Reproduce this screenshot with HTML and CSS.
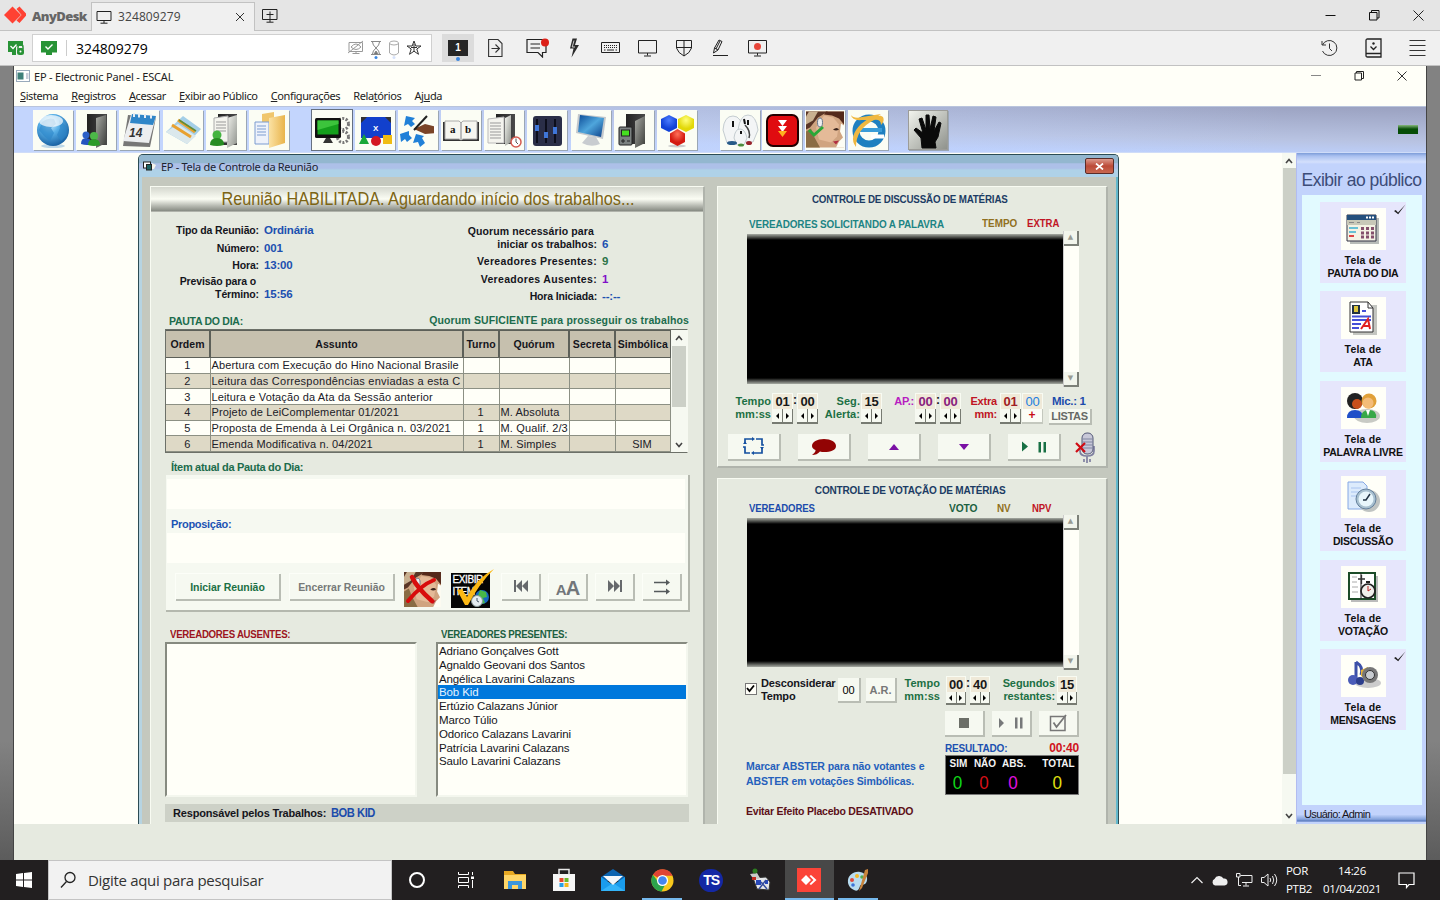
FILE: index.html
```html
<!DOCTYPE html>
<html lang="pt-BR">
<head>
<meta charset="utf-8">
<title>AnyDesk</title>
<link rel="stylesheet" href="styles.css">
</head>
<body>
<svg class="defs" width="0" height="0">
  <defs>
    <radialGradient id="globe" cx=".4" cy=".3" r=".75"><stop offset="0" stop-color="#d8f2ff"/><stop offset=".4" stop-color="#58b0e8"/><stop offset="1" stop-color="#125a9c"/></radialGradient>
    <linearGradient id="door" x1="0" x2="1"><stop offset="0" stop-color="#222"/><stop offset="1" stop-color="#4a4a4a"/></linearGradient>
    <linearGradient id="leaf" x1="0" x2="1" y2="1"><stop offset="0" stop-color="#f2f4ee"/><stop offset="1" stop-color="#8f928c"/></linearGradient>
    <linearGradient id="leafd" x1="0" x2="1" y2="1"><stop offset="0" stop-color="#a8aaa4"/><stop offset="1" stop-color="#3c3e3a"/></linearGradient>
    <linearGradient id="screen" x1="0" x2="1" y2="1"><stop offset="0" stop-color="#0b4a96"/><stop offset=".5" stop-color="#4fa6dc"/><stop offset="1" stop-color="#0c3f88"/></linearGradient>
    <linearGradient id="gold" x1="0" x2="1"><stop offset="0" stop-color="#fbe2a4"/><stop offset="1" stop-color="#e9b44c"/></linearGradient>
    <radialGradient id="hexr" cy=".3"><stop offset="0" stop-color="#ff7058"/><stop offset="1" stop-color="#d41a10"/></radialGradient>
    <radialGradient id="hexb" cy=".3"><stop offset="0" stop-color="#4b7cff"/><stop offset="1" stop-color="#1242d8"/></radialGradient>
    <radialGradient id="hexy" cy=".3"><stop offset="0" stop-color="#ffff7c"/><stop offset="1" stop-color="#e2d808"/></radialGradient>
    <symbol id="face" viewBox="0 0 38 36">
      <rect width="38" height="36" fill="#d0a480"/>
      <path d="M0 0H22L12 6L4 16L0 18Z" fill="#5a3626"/><path d="M20 0L38 0V13L33 7L26 4L18 3Z" fill="#54291a"/><path d="M3 0H12L7 9L0 13V5Z" fill="#c8b090"/>
      <path d="M0 20L5 17L8 25L14 36H0Z" fill="#8a6c44"/><path d="M18 4L27 6L33 13L31 25L25 31L13 28L10 16Z" fill="#e4ba98"/>
      <path d="M35 12L38 14V36H30L33 30L37 26L34 20Z" fill="#fdfdf4"/><path d="M27 18q4-3 6 0q-3 2-6 0" fill="#3a241c"/><path d="M27 30l6-1l-3 4z" fill="#b02c40"/>
      <ellipse cx="14" cy="11" rx="2.500" ry="4.500" fill="#eee" stroke="#65778c"/>
    </symbol>
    <symbol id="tick" viewBox="0 0 12 12"><path d="M0 8L1.800 7L4 9.500L11.500 1.500L4.200 11.300Z" fill="#222"/></symbol>
  </defs>
</svg>

<header class="tabs">
  <div class="brand"><svg width="25" height="20" viewBox="0 0 25 20"><path d="M3 10L11.500 1.500L20 10L11.500 18.500Z" fill="#ff4133"/><path d="M16.500 4L19.500 1.500L27 9.500L19.500 18L16.500 15.500L21.500 10Z" transform="translate(-1 0)" fill="#ff4133"/></svg><b>AnyDesk</b></div>
  <div class="tab">
    <svg width="16" height="14" viewBox="0 0 16 14" fill="none" stroke="#222"><path d="M1 1.500H15V10.500H1ZM8 10.500V13M4.500 13.200H11.500"/></svg>
    <span>324809279</span>
    <svg width="10" height="10" viewBox="0 0 10 10" stroke="#333" fill="none"><path d="M1 1L9 9M9 1L1 9"/></svg>
  </div>
  <svg class="newtab" width="16" height="14" viewBox="0 0 16 14" fill="none" stroke="#222"><path d="M.5.500H15V10.500H.5ZM8 2.500V13M4.500 13.200H11.500M4.500 5.500H11.500"/></svg>
  <div class="winctl">
    <svg width="11" height="11" viewBox="0 0 11 11"><path d="M.5 5.500H10.500" stroke="#111"/></svg>
    <svg width="11" height="11" viewBox="0 0 11 11" fill="none" stroke="#111"><path d="M.5 2.500H8V10H.5ZM2.500 2.500V.5H10V8H8"/></svg>
    <svg width="11" height="11" viewBox="0 0 11 11" fill="none" stroke="#222"><path d="M.5.500L10.500 10.500M10.500.500L.5 10.500"/></svg>
  </div>
</header>

<div class="bar">
  <svg class="b-lock" width="17" height="16" viewBox="0 0 17 16"><path d="M0 1H15V7H8V12H0Z M4 12H8V15H4Z" fill="#289336"/><path d="M2.500 6L5 8.500L8.500 4.500" stroke="#fff" fill="none" stroke-width="1.300"/><path d="M8.500 6H16.500V16H8.500Z" fill="#f0f0f0"/><rect x="9" y="8" width="7" height="7" rx="2.500" fill="#289336"/><path d="M10 9V7a2.500 2.500 0 0 1 5 0V9" stroke="#289336" fill="none" stroke-width="1.500"/><circle cx="12.500" cy="11.500" r="1" fill="#fff"/></svg>
  <div class="addr">
    <svg width="16" height="14" viewBox="0 0 16 14"><path d="M0 0H16V11.500H11V14H5V11.500H0Z" fill="#289336"/><path d="M4.500 5.500L7 8L11.500 3.500" stroke="#fff" fill="none" stroke-width="1.400"/></svg>
    <i></i><span>324809279</span>
    <div class="addr-ic">
      <svg width="16" height="22" viewBox="0 0 16 22" fill="none" stroke="#999"><path d="M1 5.500H14.500V14.500H1ZM8 14.500V16.500M4.500 16.500H11.500M0 16L15 4M3 10q5-6 10 0q-5 5-10 0"/></svg>
      <svg width="12" height="22" viewBox="0 0 12 22" fill="none" stroke="#888"><path d="M1 4.500H11M1 17.500H11M2.500 5Q2.500 8 6 11Q9.500 8 9.500 5M2.500 17Q2.500 14 6 11Q9.500 14 9.500 17"/><path d="M4 17L6 14L8 17" fill="#777"/><circle cx="6" cy="20.500" r="1.500" fill="#3b86e0" stroke="none"/></svg>
      <svg width="12" height="22" viewBox="0 0 12 22" fill="none" stroke="#aaa"><ellipse cx="6" cy="6" rx="4.500" ry="2"/><path d="M1.500 6V16q4.500 4 9 0V6"/><circle cx="6" cy="20.500" r="1.500" fill="#d6e2fb" stroke="none"/></svg>
      <svg width="16" height="22" viewBox="0 0 16 22" fill="none" stroke="#333"><path d="M8 4L9.800 9H15L10.800 12L12.500 17.300L8 14.200L3.500 17.300L5.200 12L1 9H6.200Z M8 7V14M5 10.500H11"/></svg>
    </div>
  </div>
  <div class="mon"><b>1</b></div>
  <div class="tools">
    <svg width="15" height="20" viewBox="0 0 15 20" fill="none" stroke="#333" stroke-width="1.100"><path d="M.6 1.500H10L14 5.500V18.500H.6ZM3.500 10.500H11.500M7.500 6.500L11.500 10.500L7.500 14.500"/></svg>
    <svg width="23" height="20" viewBox="0 0 23 20" fill="none" stroke="#222" stroke-width="1.200"><path d="M1 1.500H20V14.500H16.500V19L12 14.500H1ZM4.500 6H14M4.500 10H14"/><circle cx="19" cy="4.500" r="4" fill="#dc2018" stroke="none"/></svg>
    <svg width="11" height="20" viewBox="0 0 11 20"><path d="M3.500 .5H8L6 7H10L2.500 19.500L4.500 10.500H1Z" fill="#2a2a2a"/><path d="M5 2.500L3.200 9H6" fill="none" stroke="#eee" stroke-width=".8"/></svg>
    <svg width="19" height="20" viewBox="0 0 19 20" fill="none" stroke="#222"><path d="M.5 4.500H18.500V14.500H.5Z"/><path d="M3 7.500H16.500M3 9.500H16.500" stroke-dasharray="1 1"/><path d="M3 12H4.500M6 12H13M14.500 12H16"/></svg>
    <svg width="19" height="20" viewBox="0 0 19 20" fill="none" stroke="#222"><path d="M.5 2.500H18.500V15H.5ZM9.500 15V17.500M6 18H13"/></svg>
    <svg width="16" height="20" viewBox="0 0 16 20" fill="none" stroke="#222"><path d="M.5 2.500H15.500V10q-1.500 5-7.500 8q-6-3-7.500-8ZM8 2.500V18M.5 9.500H15.500"/></svg>
    <svg width="16" height="20" viewBox="0 0 16 20" fill="none" stroke="#222"><path d="M1 17.500H16M1.500 15L2.500 10L7 2L10 3.500L6 12L1.500 15M2.500 10L6 12M8 3L4 11"/></svg>
    <svg width="19" height="20" viewBox="0 0 19 20" fill="none" stroke="#222"><path d="M.5 2.500H18.500V15H.5ZM9.500 15V17.500M6 18H13"/><circle cx="9.500" cy="8.500" r="3.500" fill="#e8463a" stroke="none"/></svg>
  </div>
  <div class="rtools">
    <svg width="17" height="18" viewBox="0 0 17 18" fill="none" stroke="#333"><path d="M1 2V6H5M1.500 6A7.500 7.500 0 1 1 1.500 12M8.500 4.500V9.500L11 12"/></svg>
    <svg width="17" height="20" viewBox="0 0 17 20" fill="none" stroke="#222" stroke-width="1.300"><path d="M2.500 1H16V19H2.500Q1 19 1 17.500V2.500Q1 1 2.500 1M1 15.500H16"/><circle cx="8.500" cy="5.500" r="1.200" fill="#222" stroke="none"/><path d="M5.500 8.500L8.500 11.500L11.500 8.500"/></svg>
    <svg width="17" height="18" viewBox="0 0 17 18" stroke="#333"><path d="M.5 1.500H16.500M.5 6.500H16.500M.5 11.500H16.500M.5 16.500H16.500"/></svg>
  </div>
</div>

<main class="remote">
  <div class="app">
    <div class="apptitle">
      <svg width="14" height="12" viewBox="0 0 14 12"><rect x=".5" y=".5" width="13" height="11" fill="#fff" stroke="#9ab"/><rect x="1.500" y="2.500" width="6" height="7" fill="#3f8079"/><rect x="10" y="3" width="2.500" height="6" fill="#c8ccd8"/></svg>
      <span>EP - Electronic Panel - ESCAL</span>
      <div class="appctl">
        <svg width="10" height="10" viewBox="0 0 10 10"><path d="M0 4.500H10" stroke="#888"/></svg>
        <svg width="10" height="10" viewBox="0 0 10 10" fill="none" stroke="#222"><path d="M1 2H7.500V9H1ZM2.500 2V.5H9.500V7.500H7.500"/></svg>
        <svg width="10" height="10" viewBox="0 0 10 10" stroke="#333"><path d="M.5.500L9.500 9.500M9.500.500L.5 9.500"/></svg>
      </div>
    </div>
    <nav class="menu"><span><u>S</u>istema</span><span><u>R</u>egistros</span><span><u>A</u>cessar</span><span><u>E</u>xibir ao Público</span><span><u>C</u>onfigurações</span><span>Rela<u>t</u>órios</span><span>Aj<u>u</u>da</span></nav>

    <div class="ribbon">
      <div class="rg">
        <svg viewBox="0 0 40 40"><ellipse cx="20" cy="36" rx="12" ry="2" fill="#bdd8e8"/><circle cx="20" cy="20" r="16" fill="url(#globe)"/><path d="M9 12q6-5 12-3l2 5l-5 4l3 5l-4 8l-6-5l-5-6zM26 10l7 6l1 9l-6 6l-4-6l3-7z" fill="#2c86c8" opacity=".65"/><ellipse cx="18" cy="11" rx="12" ry="6" fill="#fff" opacity=".7"/></svg>
        <svg viewBox="0 0 40 40"><path d="M11 4H31V35H11Z" fill="url(#door)"/><path d="M20 8L30 5V33L20 38Z" fill="url(#leafd)"/><circle cx="10" cy="25" r="3.500" fill="#2c60c8"/><path d="M5 34q0-6 5-6t6 6q-5 2-11 0z" fill="#2454c0"/><circle cx="18" cy="26" r="4" fill="#4cb848"/><path d="M12 35q0-6 6-6t6 6q-6 2-12 0z" fill="#2c9c28"/></svg>
        <svg viewBox="0 0 40 40"><path d="M9 5L37 7L31 37L4 36Z" fill="#777"/><path d="M12 5L37 6L30 33L4 31Z" fill="#eceef0"/><path d="M13 4L37 6L34 15L11 13Z" fill="#2f86c8"/><path d="M15 3v4M20 3.500v4M26 4v4M32 4.500v4" stroke="#e8eef4" stroke-width="2"/><text x="10" y="27" class="cal">14</text></svg>
        <svg viewBox="0 0 40 40"><path d="M3 22L20 6L38 19L24 34Z" fill="#a4cfe8"/><path d="M3 22L15 14L33 26L24 34Z" fill="#dbe8ec"/><path d="M9 15L28 27M15 10L32 22" stroke="#e8a130" stroke-width="3"/><path d="M16 10L33 21" stroke="#608c38" stroke-width="1.500"/></svg>
        <svg viewBox="0 0 40 40"><path d="M12 4H31V35H12Z" fill="url(#door)"/><path d="M21 8L31 5V33L21 38Z" fill="url(#leaf)"/><path d="M8 8L22 6V32L8 32Z" fill="#f4f4ee" stroke="#aaa"/><path d="M10 12H20M10 15H20M10 18H20M10 21H20" stroke="#999"/><circle cx="11" cy="25" r="4.500" fill="#45b440"/><path d="M4 35q0-7 7-7t7 7q-7 2-14 0z" fill="#278c22"/></svg>
        <svg viewBox="0 0 40 40"><path d="M13 4L25 2V34L13 33Z" fill="#f0c66c"/><path d="M6 12H20V34H6Z" fill="#eef2fa" stroke="#7d9cd0"/><path d="M8 16H17M8 19H17M8 22H17M8 25H17" stroke="#7d9cd0"/><path d="M20 8L36 5V33L20 38Z" fill="url(#gold)"/></svg>
      </div>
      <div class="rg g2">
        <svg class="on" viewBox="0 0 40 40"><g fill="none" stroke="#777" stroke-width="3" stroke-dasharray="2 1.500"><circle cx="31" cy="14" r="5.500"/><circle cx="31" cy="27" r="5.500"/></g><rect x="3" y="8" width="26" height="20" rx="1.500" fill="#111"/><rect x="5.500" y="10.500" width="21" height="14" fill="#14a01c"/><path d="M5.500 10.500H26.500V14L5.500 20Z" fill="#3cc43c"/><path d="M14 28H18L21 33H11Z" fill="#333"/></svg>
        <svg viewBox="0 0 40 40"><path d="M6 7H36V28H6Z" fill="#1240cc"/><path d="M6 7h6l-6 6zM36 7h-6l6 6z" fill="#333"/><text x="18" y="21" class="xw">X</text><path d="M9 24L14 34H4Z" fill="#18a838"/><circle cx="21" cy="31" r="5" fill="#d41822"/><rect x="28" y="25" width="9" height="9" fill="#f0bc12"/></svg>
        <svg viewBox="0 0 40 40"><path d="M8 6L17 8L14 11L17 14L13 17L10 14L6 16ZM2 24L11 21L11 25L14 28L9 32L7 29L3 32ZM18 24L26 26L24 28L27 33L22 37L20 32L15 33Z" fill="#2080d8"/><path d="M16 19L27 14L39 17V23L27 24Z" fill="#7a4428"/><path d="M36 16h4v8h-4z" fill="#fff"/><path d="M16 20L29 6" stroke="#202020" stroke-width="2"/></svg>
        <svg viewBox="0 0 40 40"><path d="M2 12V31H38V12" fill="#333"/><path d="M4 11H18Q20 12 20 14Q20 12 22 11H36V29H22L20 30L18 29H4Z" fill="#f6f6f0" stroke="#aaa"/><path d="M20 13V30" stroke="#bbb" stroke-width="2"/><text x="9" y="23" class="ab">a</text><text x="24" y="23" class="ab">b</text></svg>
        <svg viewBox="0 0 40 40"><path d="M12 4H31V34H12Z" fill="url(#door)"/><path d="M21 8L27 5V32L21 36Z" fill="url(#leaf)"/><path d="M4 9L20 7V33H4Z" fill="#f4f4ee" stroke="#bbb"/><path d="M6 13H17M6 16H17M6 19H17M6 22H17M6 25H17M6 28H17" stroke="#999"/><circle cx="32" cy="32" r="5" fill="#fff" stroke="#d45a50" stroke-width="1.500"/><path d="M32 28.500V32L34 34" fill="none" stroke="#555"/></svg>
        <svg viewBox="0 0 40 40"><rect x="6" y="6" width="29" height="30" rx="3" fill="#2a2e48"/><path d="M10 9V33M19 9V33M28 9V33" stroke="#0c0e1c" stroke-width="2"/><path d="M8 15h4v6H8zM17 22h4v6h-4zM26 17h4v7h-4z" fill="#3f76d8"/></svg>
        <svg viewBox="0 0 40 40"><path d="M17 26L25 27L29 34Q20 38 11 33Z" fill="#c8ccd0"/><path d="M7 4L35 7L32 29L5 23Z" fill="#c4c8cc"/><path d="M9 5L33 8L30 27L7 22Z" fill="url(#screen)"/></svg>
        <svg viewBox="0 0 40 40"><path d="M12 4H31V34H12Z" fill="url(#door)"/><path d="M21 11L31 6V33L21 38Z" fill="url(#leafd)"/><rect x="5" y="17" width="13" height="18" rx="1" fill="#7b8180" stroke="#222"/><rect x="7.500" y="20" width="8" height="6" fill="#46e020" stroke="#222"/><path d="M7 31h4M9 29v4M13 31h3" stroke="#222"/></svg>
        <svg viewBox="0 0 40 40"><ellipse cx="20" cy="36" rx="9" ry="1.500" fill="#ccc"/><path d="M12 5L20 9V18L12 22L4 18V9Z" fill="url(#hexb)"/><path d="M29 5L37 9V18L29 22L21 18V9Z" fill="url(#hexy)"/><path d="M20.500 19L28 23.500V32L20.500 36L13 32V23.500Z" fill="url(#hexr)"/></svg>
      </div>
      <div class="rg g3">
        <svg viewBox="0 0 40 40"><g fill="#f3f5f6" stroke="#c4ccd0"><path d="M3 20Q4 6 13 6T23 22L19 33H7Z"/><path d="M18 20Q20 5 28 5T38 20L33 32H22Z"/><path d="M14 28Q15 19 20 19T27 28L24 35H17Z"/></g><path d="M13 11v6M24 9l1 5M28 10v5M21 21v3" stroke="#111" stroke-width="2"/><path d="M25 15q6 6 4 13" stroke="#444" fill="none" stroke-width="1.500"/><ellipse cx="12" cy="33" rx="5" ry="2" fill="#275a88"/><ellipse cx="29" cy="33" rx="3" ry="2" fill="#98242c"/><ellipse cx="21" cy="35" rx="3" ry="1.500" fill="#4c8c3c"/></svg>
        <svg viewBox="0 0 40 40"><rect x="5" y="5" width="31" height="31" rx="6" fill="#e00c10" stroke="#200" stroke-width="2"/><path d="M16 10H25L20.500 16ZM16 16H25L20.500 22Z" fill="#fff"/><path d="M16 21H25L20.500 27Z" fill="#ffb020"/></svg>
        <svg viewBox="0 0 40 40"><use href="#face" x="1" y="1" width="38" height="37"/><path d="M4 20L9 25L18 17" fill="none" stroke="#2aa838" stroke-width="3"/></svg>
        <svg viewBox="0 0 40 40"><circle cx="21" cy="21" r="13" fill="none" stroke="#1e80c0" stroke-width="7"/><path d="M12 20H34" stroke="#3a9cd8" stroke-width="4"/><path d="M36 26.500H23" stroke="#fff" stroke-width="4"/><path d="M8 37Q0 27 13 14Q28 2 35 7Q37 11 33 15Q33 9 26 10Q8 19 8 37ZM3 5Q6 9 14 7L33 4Q25 10 14 10Q4 11 3 5Z" fill="#f0b840"/></svg>
      </div>
      <div class="rg g4">
        <svg viewBox="0 0 40 40"><rect width="40" height="40" fill="#9c9c98"/><rect x="1" y="1" width="38" height="38" fill="url(#leaf)"/><path d="M14 38L13 28L6 20L8 18L15 23L11 9L14 8L18 20L18 5L21 5L22 19L25 6L28 7L26 21L31 12L33 13L30 27L27 32L28 38Z" fill="#0a0a0a" stroke="#0a0a0a"/></svg>
      </div>
      <span class="led"></span>
    </div>

    <div class="mdi">
      <div class="client">
        <section class="win">
          <div class="wtitle"><svg width="14" height="10" viewBox="0 0 14 10"><rect x=".5" y="1" width="7" height="6" fill="#fff" stroke="#222"/><rect x="3.500" y="3.500" width="5" height="5.500" fill="#1c6464" stroke="#222"/><path d="M9 2L13 4L11 8L9 8Z" fill="#f4f4ec"/></svg><span>EP - Tela de Controle da Reunião</span><div class="wclose"><svg width="9" height="7" viewBox="0 0 9 7"><path d="M1 .5L8 6.500M8 .5L1 6.500" stroke="#fff" stroke-width="1.700"/></svg></div></div>
          <div class="wbody">
            <div class="panel left">
              <h1><span>Reunião HABILITADA. Aguardando início dos trabalhos...</span></h1>
              <div class="info">
                <dl class="i1">
                  <dt>Tipo da Reunião:</dt><dd>Ordinária</dd>
                  <dt>Número:</dt><dd>001</dd>
                  <dt>Hora:</dt><dd>13:00</dd>
                  <dt class="s pr">Previsão para o</dt><dd class="s"></dd>
                  <dt class="s">Término:</dt><dd class="s">15:56</dd>
                </dl>
                <dl class="i2">
                  <dt class="s pr">Quorum necessário para</dt><dd class="s"></dd>
                  <dt class="s gap">iniciar os trabalhos:</dt><dd class="s gap">6</dd>
                  <dt>Vereadores Presentes:</dt><dd class="green">9</dd>
                  <dt>Vereadores Ausentes:</dt><dd class="violet">1</dd>
                  <dt class="tight">Hora Iniciada:</dt><dd>--:--</dd>
                </dl>
              </div>
              <div class="cap"><b>PAUTA DO DIA:</b><b class="suf">Quorum SUFICIENTE para prosseguir os trabalhos</b></div>
              <div class="gridbox">
                <table>
                  <colgroup><col class="c1"><col class="c2"><col class="c3"><col class="c4"><col class="c5"><col class="c6"></colgroup>
                  <thead><tr><th>Ordem</th><th>Assunto</th><th>Turno</th><th>Quórum</th><th>Secreta</th><th>Simbólica</th></tr></thead>
                  <tbody>
                    <tr><td>1</td><td>Abertura com Execução do Hino Nacional Brasile</td><td></td><td></td><td></td><td></td></tr>
                    <tr><td>2</td><td class="wide">Leitura das Correspondências enviadas a esta C</td><td></td><td></td><td></td><td></td></tr>
                    <tr><td>3</td><td>Leitura e Votação da Ata da Sessão anterior</td><td></td><td></td><td></td><td></td></tr>
                    <tr><td>4</td><td>Projeto de LeiComplementar 01/2021</td><td>1</td><td>M. Absoluta</td><td></td><td></td></tr>
                    <tr><td>5</td><td>Proposta de Emenda à Lei Orgânica n. 03/2021</td><td>1</td><td>M. Qualif. 2/3</td><td></td><td></td></tr>
                    <tr><td>6</td><td>Emenda Modificativa n. 04/2021</td><td>1</td><td>M. Simples</td><td></td><td>SIM</td></tr>
                  </tbody>
                </table>
                <div class="vs"><svg width="8" height="6" viewBox="0 0 8 6"><path d="M1 5L4 1.500L7 5" fill="none" stroke="#444" stroke-width="1.600"/></svg><i></i><svg width="8" height="6" viewBox="0 0 8 6"><path d="M1 1L4 4.500L7 1" fill="none" stroke="#444" stroke-width="1.600"/></svg></div>
              </div>
              <b class="item">Ítem atual da Pauta do Dia:</b>
              <div class="itembox">
                <div class="fld"></div>
                <b>Proposição:</b>
                <div class="fld"></div>
                <div class="ibtns">
                  <button class="w105 gr">Iniciar Reunião</button>
                  <button class="w105 dis">Encerrar Reunião</button>
                  <svg class="p1" width="37" height="35" viewBox="0 0 37 35"><use href="#face" width="37" height="35"/><path d="M8 5Q13 16 28 29" fill="none" stroke="#d80c0c" stroke-width="4.500" stroke-linecap="round"/><path d="M30 8Q17 13 4 29" fill="none" stroke="#d80c0c" stroke-width="4" stroke-linecap="round"/></svg>
                  <svg class="p2" width="44" height="40" viewBox="0 0 44 40"><rect y="5" width="39" height="35" fill="#050505"/><text x="1.500" y="14.500" class="ex">EXIBIR</text><text x="1.500" y="27" class="ex">ITEM</text><circle cx="31" cy="29" r="7" fill="#1668c0"/><path d="M29 22l6 2l1 5l-4 1l2 5l-4 1l-4-6z" fill="#48b848"/><circle cx="26" cy="33" r="5.500" fill="#e4ecf0" stroke="#899"/><path d="M26 30V33L28 34" fill="none" stroke="#456"/><path d="M6 22L11 21L16 29Q26 10 43 1Q28 16 17 37H14Z" fill="#fbb814"/></svg>
                  <button class="w39 n1"><svg width="16" height="13" viewBox="0 0 16 13" fill="#66696c"><path d="M1 0H3V12H1ZM9 0V12L3 6ZM15 0V12L9 6Z"/></svg></button>
                  <button class="w39 aa"><small>A</small>A</button>
                  <button class="w39"><svg width="16" height="13" viewBox="0 0 16 13" fill="#66696c"><path d="M13 0H15V12H13ZM7 0V12L13 6ZM1 0V12L7 6Z"/></svg></button>
                  <button class="w39"><svg width="18" height="16" viewBox="0 0 18 16" fill="none" stroke="#555a5c" stroke-width="1.600"><path d="M1 3.500H15M1 12.500H15"/><path d="M13 .5L17 3.500L13 6.500ZM13 9.500L17 12.500L13 15.500Z" fill="#555a5c" stroke="none"/></svg></button>
                </div>
              </div>
              <div class="lists">
                <div><b class="dred">VEREADORES AUSENTES:</b><ul></ul></div>
                <div><b class="dgreen">VEREADORES PRESENTES:</b><ul><li>Adriano Gonçalves Gott</li><li>Agnaldo Geovani dos Santos</li><li>Angélica Lavarini Calazans</li><li class="sel">Bob Kid</li><li>Ertúzio Calazans Júnior</li><li>Marco Túlio</li><li>Odorico Calazans Lavarini</li><li>Patrícia Lavarini Calazans</li><li>Saulo Lavarini Calazans</li></ul></div>
              </div>
              <div class="resp"><b>Responsável pelos Trabalhos:</b><b class="blue">BOB KID</b></div>
            </div>

            <div class="right">
              <div class="panel disc">
                <h2>CONTROLE DE DISCUSSÃO DE MATÉRIAS</h2>
                <div class="heads"><b class="teal">VEREADORES SOLICITANDO A PALAVRA</b><b class="ochre">TEMPO</b><b class="red">EXTRA</b></div>
                <div class="lcd"><div></div><div class="os"><i>▲</i><i>▼</i></div></div>
                <div class="spins">
                  <label class="gr">Tempo<br>mm:ss</label>
                  <div class="spin">01<s></s></div><b>:</b><div class="spin">00<s></s></div>
                  <label class="gr">Seg.<br>Alerta:</label><div class="spin">15<s></s></div>
                  <label class="mag">AP.:<br>&nbsp;</label><div class="spin pur">00<s></s></div><b>:</b><div class="spin pur">00<s></s></div>
                  <label class="red">Extra<br>mm:</label><div class="spin drd">01<s></s></div><div class="spin plus">00<s></s></div>
                  <div class="mic"><b>Mic.: 1</b><button>LISTAS</button></div>
                </div>
                <div class="dbtns">
                  <button><svg width="24" height="19" viewBox="0 0 24 19" fill="none" stroke="#1450a0" stroke-width="1.700"><path d="M10 2H3V7M1 10H3V16H8M12 16H20V11M22 8H20V2H14"/><path d="M10 0L13 2L10 4ZM12 14L9 16L12 18ZM1 7H5L3 4.500ZM18 10H22L20 12.500Z" fill="#1450a0" stroke="none"/></svg></button>
                  <button><svg width="26" height="18" viewBox="0 0 26 18"><path d="M13 1C20 1 25 4 25 8S20 14 13 14Q11 14 9 13.500Q6 17 1 17Q5 14 4.500 12Q1 10.500 1 8C1 4 6 1 13 1Z" fill="#920404"/></svg></button>
                  <button><svg width="10" height="6" viewBox="0 0 10 6"><path d="M0 6L5 0L10 6Z" fill="#7a10a4"/></svg></button>
                  <button><svg width="10" height="6" viewBox="0 0 10 6"><path d="M0 0L5 6L10 0Z" fill="#7a10a4"/></svg></button>
                  <button><svg width="24" height="12" viewBox="0 0 24 12" fill="#187044"><path d="M0 .5L6 5.500L0 10.500ZM16.500 1H19V11.500H16.500ZM21.500 1H24V11.500H21.500Z"/></svg></button>
                  <svg class="micro" width="22" height="32" viewBox="0 0 22 32"><path d="M5 14V19Q5 24 12 24T19 19V14M12 24V31M9 27V30M15 27V30" fill="none" stroke="#7f80a0" stroke-width="1.700"/><rect x="7" y="1" width="11" height="21" rx="5" fill="#c8c8d8" stroke="#555a78"/><path d="M7 7H18M7 10H18M7 13H18M7 16H18" stroke="#8086a0"/><path d="M1 11L10 20M10 11L1 20" stroke="#d00c14" stroke-width="2.200"/></svg>
                </div>
              </div>
              <div class="panel vote">
                <h2>CONTROLE DE VOTAÇÃO DE MATÉRIAS</h2>
                <div class="heads v"><b class="blue">VEREADORES</b><b class="dgreen">VOTO</b><b class="ochre">NV</b><b class="red">NPV</b></div>
                <div class="lcd"><div></div><div class="os"><i>▲</i><i>▼</i></div></div>
                <div class="vopts">
                  <span class="chk"><svg width="9" height="9" viewBox="0 0 9 9"><path d="M1 4L3.500 7L8 1.500" fill="none" stroke="#000" stroke-width="1.800"/></svg></span>
                  <label class="blk">Desconsiderar<br>Tempo</label>
                  <button class="z">00</button><button class="ar">A.R.</button>
                  <label class="gr t">Tempo<br>mm:ss</label>
                  <div class="spin">00<s></s></div><b>:</b><div class="spin">40<s></s></div>
                  <label class="gr seg">Segundos<br>restantes:</label><div class="spin">15<s></s></div>
                </div>
                <div class="vbtns">
                  <button><svg width="10" height="10"><rect width="10" height="10" fill="#6c6f68"/></svg></button>
                  <button><svg width="24" height="12" viewBox="0 0 24 12" fill="#77797a"><path d="M0 1L5 6L0 11ZM16 .5H18.500V11.500H16ZM21 .5H23.500V11.500H21Z"/></svg></button>
                  <button><svg width="19" height="18" viewBox="0 0 19 18" fill="none" stroke="#777"><path d="M1.500 2.500H16V16.500H1.500Z" stroke-width="1.500"/><path d="M4.500 8.500L7.500 13L17 1" stroke-width="1.800"/></svg></button>
                </div>
                <div class="vbot">
                  <div class="notes"><p>Marcar ABSTER para não votantes e<br>ABSTER em votações Simbólicas.</p><p class="evi">Evitar Efeito Placebo DESATIVADO</p></div>
                  <div class="res">
                    <div class="rh"><b>RESULTADO:</b><b>00:40</b></div>
                    <div class="score"><b>SIM</b><b>NÃO</b><b>ABS.</b><b>TOTAL</b><i class="g">0</i><i class="r">0</i><i class="m">0</i><i class="y">0</i></div>
                  </div>
                </div>
              </div>
            </div>
          </div>
        </section>
      </div>
      <div class="cvs"><svg width="8" height="6" viewBox="0 0 8 6"><path d="M1 5L4 1.500L7 5" fill="none" stroke="#444" stroke-width="1.600"/></svg><i></i><svg width="8" height="6" viewBox="0 0 8 6"><path d="M1 1L4 4.500L7 1" fill="none" stroke="#444" stroke-width="1.600"/></svg></div>
      <aside class="side">
        <h3>Exibir ao público</h3>
        <div class="cards">
          <div class="card"><svg viewBox="0 0 45 42"><path d="M9 10H38V36H9Z" fill="#b8bcb8"/><path d="M6 7H35V33H6Z" fill="#f4f2e4" stroke="#334"/><path d="M6 7H35V12H6Z" fill="#24507c"/><path d="M25 9.500H33" stroke="#fff" stroke-width="2" stroke-dasharray="2 1"/><path d="M6 12H35V17H6Z" fill="#c8c8b8"/><path d="M8 14.500H13M16 14.500H19" stroke="#888"/><path d="M8 20H17M8 24H15" stroke="#3ab0d0" stroke-width="1.500"/><path d="M8 28H13" stroke="#d44" stroke-width="2"/><path d="M20 20.500H33M20 25H33M20 29H33" stroke="#84506c" stroke-width="3" stroke-dasharray="3 2"/></svg><b>Tela de</b><b class="n">PAUTA DO DIA</b><em><svg><use href="#tick"/></svg></em></div>
          <div class="card"><svg viewBox="0 0 45 42"><path d="M12 8H36V38H12Z" fill="#c4c6c0"/><path d="M9 5H27L32 11V35H9Z" fill="#fff" stroke="#333"/><path d="M27 5V11H32" fill="none" stroke="#333"/><rect x="11" y="8" width="8" height="9" fill="#234"/><path d="M13 9h4v6h-4z" fill="#dcc43c"/><path d="M21 14H25M11 19.500H30M11 23H30M11 27H20M11 31H18" stroke="#4450d8" stroke-width="2"/><path d="M20 32L27 22L29 32M22 29H29" fill="none" stroke="#e02020" stroke-width="2"/></svg><b>Tela de</b><b class="n">ATA</b></div>
          <div class="card"><svg viewBox="0 0 45 42"><ellipse cx="26" cy="29" rx="13" ry="7" fill="#c8cac4"/><circle cx="14" cy="14" r="8" fill="#222"/><circle cx="16" cy="17" r="5" fill="#c8501c"/><path d="M6 31Q6 23 14 23T22 31Z" fill="#2050c8"/><circle cx="28" cy="14" r="7.500" fill="#e0a038"/><circle cx="27" cy="16" r="5.500" fill="#f4bc78"/><path d="M20 31Q20 23 28 23T35 31Z" fill="#38a848"/><path d="M25 23L27 29L29 23" fill="#fff"/></svg><b>Tela de</b><b class="n">PALAVRA LIVRE</b></div>
          <div class="card"><svg viewBox="0 0 45 42"><path d="M7 6H22L26 10V33H7Z" fill="#dcebfc" stroke="#86a8e4"/><path d="M10 12H20M10 16H20M10 20H18" stroke="#a9c4f0"/><circle cx="28" cy="25" r="11" fill="#c0c4c2"/><circle cx="25" cy="23" r="10" fill="#a8c0d0" stroke="#64809c"/><circle cx="25" cy="23" r="7.500" fill="#e8f6fc"/><path d="M22 24L25 24L29 18" fill="none" stroke="#234" stroke-width="1.500"/></svg><b>Tela de</b><b class="n">DISCUSSÃO</b></div>
          <div class="card"><svg viewBox="0 0 45 42"><path d="M10 10H37V36H10Z" fill="#bbb"/><path d="M8 7H34V33H8Z" fill="#fff" stroke="#1c4c28" stroke-width="2"/><path d="M11 11H16M11 16H16M11 21H17M11 26H17" stroke="#aaa"/><path d="M20 7V33" stroke="#222"/><path d="M20.500 9V18M17 13H24" stroke="#333" stroke-width="1.300"/><circle cx="27" cy="25" r="7" fill="#f0f0ec" stroke="#222" stroke-width="1.700"/><path d="M27 20V25L30 23" fill="none" stroke="#b22"/><path d="M25 16H29" stroke="#222" stroke-width="2"/></svg><b>Tela de</b><b class="n">VOTAÇÃO</b></div>
          <div class="card"><svg viewBox="0 0 45 42"><ellipse cx="27" cy="28" rx="13" ry="5" fill="#ccc"/><path d="M15 7Q23 12 20 20M15 7V26" fill="none" stroke="#3c50a8" stroke-width="3"/><circle cx="12" cy="25" r="5" fill="#4a5cb8"/><circle cx="19" cy="26" r="4" fill="#2c3e8c"/><path d="M20 15L27 12V25L20 21Z" fill="#e8b434"/><circle cx="29" cy="20" r="8" fill="#777"/><circle cx="29" cy="20" r="4.500" fill="#c8ccd0" stroke="#333"/></svg><b>Tela de</b><b class="n">MENSAGENS</b><em><svg><use href="#tick"/></svg></em></div>
        </div>
        <footer>Usuário: Admin</footer>
      </aside>
    </div>
  </div>
</main>

<div class="taskbar">
  <div class="start"><svg width="16" height="16" viewBox="0 0 16 16" fill="#fff"><path d="M0 2L7 1V7.500H0ZM8 1L16 0V7.500H8ZM0 8.500H7V15L0 14ZM8 8.500H16V16L8 15Z"/></svg></div>
  <div class="search"><svg width="18" height="18" viewBox="0 0 18 18" fill="none" stroke="#222" stroke-width="1.300"><circle cx="11" cy="6.500" r="5"/><path d="M7.500 10.500L2 16.500"/></svg><span>Digite aqui para pesquisar</span></div>
  <div class="apps">
    <div><svg width="18" height="18" viewBox="0 0 18 18"><circle cx="9" cy="9" r="7" fill="none" stroke="#fff" stroke-width="2"/></svg></div>
    <div><svg width="18" height="16" viewBox="0 0 18 16" fill="none" stroke="#fff"><path d="M1.500 0V2.500H11.500V0M1.500 5.500H11.500V10.500H1.500ZM1.500 16V13.500H11.500V16M15.500 0V3M15.500 8V16"/><path d="M14 4.500H17V7H14Z" fill="#fff" stroke="none"/></svg></div>
    <div><svg width="22" height="20" viewBox="0 0 22 20"><path d="M0 1H9L11 4H22V18H0Z" fill="#e8a922"/><path d="M0 5H22V19H0Z" fill="#ffd667"/><path d="M4 19V11H18V19H14V15H8V19Z" fill="#3a96dc"/></svg></div>
    <div><svg width="24" height="24" viewBox="0 0 24 24"><path d="M1 6H23V23H1Z" fill="#f6f6f6"/><path d="M7 7V1.500H17V7" fill="none" stroke="#e8e8e8" stroke-width="1.500"/><path d="M7.500 10H11.500V14H7.500Z" fill="#e8482c"/><path d="M12.500 10H16.500V14H12.500Z" fill="#6cb82c"/><path d="M7.500 15H11.500V19H7.500Z" fill="#28a0e8"/><path d="M12.500 15H16.500V19H12.500Z" fill="#f8b818"/></svg></div>
    <div><svg width="24" height="22" viewBox="0 0 24 22"><path d="M0 8L12 0L24 8V12H0Z" fill="#0c64b0"/><path d="M0 8L12 16L24 8V22H0Z" fill="#1a9cec"/><path d="M0 22L12 14L24 22Z" fill="#34b4f8"/><path d="M2 7H22L12 16Z" fill="#f4f8fa"/></svg></div>
    <div class="run"><svg width="23" height="23" viewBox="0 0 24 24"><circle cx="12" cy="12" r="11.500" fill="#f8c81c"/><path d="M12 12L2 6A11.500 11.500 0 0 1 22.500 7H12Z" fill="#e04434"/><path d="M2 6A11.500 11.500 0 0 0 11 23.500L16 14L8 14Z" fill="#2ca44c"/><circle cx="12" cy="12" r="5.800" fill="#fff"/><circle cx="12" cy="12" r="4.500" fill="#4486f0"/></svg></div>
    <div><span class="ts">TS</span></div>
    <div><svg width="24" height="24" viewBox="0 0 24 24"><path d="M5 10L18 9L22 14L21 22L9 21Z" fill="#e4e6e8" stroke="#333"/><path d="M2 6L9 5L12 10L6 12Z" fill="#c8ccc8"/><circle cx="7" cy="3" r="2.500" fill="#2c7c20"/><path d="M8 12h5v5H8zM17 12h3v4h-3z" fill="#2848b8"/><path d="M4 9h4v3H4z" fill="#c02c20"/><path d="M13 14L19 21M11 21L18 12" stroke="#344c9c" stroke-width="1.500"/></svg></div>
    <div class="run act"><svg width="24" height="24" viewBox="0 0 24 24"><rect width="24" height="24" fill="#fb4438"/><path d="M4 12L9 7L14 12L9 17ZM12.500 8L14 7L19.500 12L14 17L12.500 16L16.500 12Z" fill="#fff"/></svg></div>
    <div class="run"><svg width="25" height="24" viewBox="0 0 25 24"><path d="M2 15C1 7 8 3 14 4C20 5 23 10 20 15C18 18 15 15 14 18S12 24 8 22Q3 20 2 15Z" fill="#b8dcf0"/><circle cx="6" cy="12" r="2" fill="#e0483c"/><circle cx="11" cy="8" r="2" fill="#f4b828"/><circle cx="16" cy="9" r="1.800" fill="#50b050"/><circle cx="7" cy="17" r="1.800" fill="#3c74d8"/><path d="M13 23L19 2L22 1V5L16 20Z" fill="#c8843c"/></svg></div>
  </div>
  <div class="tray">
    <svg width="12" height="8" viewBox="0 0 12 8" fill="none" stroke="#eee" stroke-width="1.200"><path d="M.5 7L6 1.500L11.500 7"/></svg>
    <svg width="17" height="11" viewBox="0 0 17 11" fill="#eee"><path d="M4 10.500A3.500 3.500 0 0 1 3.500 4A5 5 0 0 1 12.500 3.500A3.500 3.500 0 0 1 13.500 10.500Z"/></svg>
    <svg width="17" height="14" viewBox="0 0 17 14" fill="none" stroke="#eee"><path d="M4.500 2.500H16V9.500H6M10 9.500V12.500M7 13H13M.5.500H4V4H.5ZM2.500 4V12.500H5"/></svg>
    <svg width="17" height="14" viewBox="0 0 17 14" fill="none" stroke="#eee"><path d="M.5 4.500H3L7 1V13L3 9.500H.5ZM9 5Q10.500 7 9 9M11.500 3Q14 7 11.500 11M13.500 1Q18 7 13.500 13"/></svg>
    <span class="lang">POR<br>PTB2</span>
    <span class="clock">14:26<br>01/04/2021</span>
    <svg class="notif" width="17" height="17" viewBox="0 0 17 17" fill="none" stroke="#fff" stroke-width="1.200"><path d="M1 1H16V12.500H11L8.500 15.500L8.500 12.500H1Z"/></svg>
  </div>
</div>
</body>
</html>
```
FILE: styles.css
```css
* { box-sizing: border-box; }
body { margin: 0; width: 1440px; height: 900px; overflow: hidden; display: flex; flex-direction: column; font: 12px "Liberation Sans", Arial, sans-serif; color: #15151c; background: #808080; }
svg { display: block; flex: none; }
.defs { position: absolute; }
h1, h2, h3, p, ul, dl, dd, dt { margin: 0; padding: 0; font-size: inherit; }
ul { list-style: none; }
button { font: inherit; padding: 0; border: 0; display: flex; align-items: center; justify-content: center; background: #f6f9f1; border-right: 2px solid #b9bdb4; border-bottom: 2px solid #b9bdb4; }
span, b, dt, dd, h1, h2, h3, td, th, label, button { white-space: nowrap; }

.tabs { height: 31px; flex: none; display: flex; background: #e5e5e5; border-bottom: 1px solid #c2c2c2; }
.brand { width: 91px; display: flex; align-items: center; font: 700 13px "Open Sans", sans-serif; color: #666; }
.brand svg { margin: 0 6px 0 1px; }
.brand b { letter-spacing: -.6px; padding-top: 1px; }
.tab { width: 164px; margin-top: 2px; height: 29px; background: #f0f0f0; border: 1px solid #c2c2c2; border-bottom: 0; display: flex; align-items: center; padding: 0 9px 0 4px; font: 12px "Open Sans", sans-serif; color: #444; }
.tab span { flex: 1; margin: -2px 0 0 6px; letter-spacing: .1px; }
.newtab { margin: 9px 0 0 7px; }
.winctl { margin-left: auto; display: flex; gap: 33px; padding: 10px 16px 0 0; }

.bar { height: 35px; flex: none; display: flex; align-items: center; background: #f0f0f0; border-bottom: 1px solid #c2c2c2; }
.b-lock { margin-left: 8px; }
.addr { width: 400px; height: 28px; margin-left: 7px; background: #fff; border: 1px solid #d0d0d0; display: flex; align-items: center; padding: 0 9px 0 8px; }
.addr i { width: 1px; height: 16px; background: #ccc; margin: 0 9px; }
.addr span { font: 14px "Open Sans", sans-serif; color: #000; letter-spacing: -.05px; }
.addr-ic { margin-left: auto; display: flex; gap: 6px; }
.mon { width: 32px; height: 28px; margin-left: 10px; background: #dcdcdc; display: flex; flex-direction: column; align-items: center; padding-top: 6px; }
.mon b { width: 20px; height: 16px; background: #262626; color: #fff; font-size: 10px; line-height: 16px; text-align: center; }
.mon::after { content: ""; width: 4px; height: 4px; border-radius: 2px; background: #3b86e0; margin-top: 1px; }
.tools { display: flex; margin-left: 14px; gap: 20px; }
.tools svg:nth-child(2) { margin-left: 3px; }
.tools svg:nth-child(4) { margin-left: 1px; }
.tools svg:nth-child(5) { margin-left: -2px; }
.tools svg:nth-child(6) { margin-left: -1px; }
.tools svg:nth-child(8) { margin-left: 0; }
.rtools { margin-left: auto; display: flex; align-items: center; gap: 27px; padding-right: 14px; }

.remote { flex: 1; padding: 0 14px; background: linear-gradient(#828282 85%, #5c5c5c); }
.app { height: 794px; background: #e6eae0; display: flex; flex-direction: column; outline: 1px solid #444; clip-path: inset(0 -1px); }
.apptitle { height: 20px; background: #fffff8; display: flex; align-items: center; padding-left: 2px; font: 11px "Noto Sans", sans-serif; color: #222; }
.apptitle span { margin: 1px 0 0 4px; letter-spacing: -.2px; }
.appctl { margin-left: auto; display: flex; gap: 33px; padding-right: 19px; }
.menu { height: 20px; background: #fffff8; display: flex; padding: 1px 0 0 6px; gap: 13.200px; font: 11px/18px "Noto Sans", sans-serif; color: #222; letter-spacing: -.4px; }

.ribbon { height: 47px; display: flex; align-items: flex-start; padding: 3px 0 0 19px; border-top: 1px solid #b9c4dc; border-bottom: 1px solid #cfdcf8; background: linear-gradient(90deg, #c3d5fd 0%, #c3d5fd 22%, rgba(195,213,253,.5) 40%, rgba(195,213,253,0) 90%), linear-gradient(181deg, #9aa1c0 0%, #b8c3e2 50%, #bdd0fc 72%, #c4d7ff 100%); }
.rg { display: flex; gap: 3.200px; }
.rg svg { width: 40px; height: 40px; background: #fbfdf4; box-shadow: 1px 1px 0 #9aa6b4; }
.rg svg.on { box-shadow: 0 0 0 1px #667080; }
.g2 { margin-left: 23px; gap: 3.100px; }
.g3 { margin-left: 23px; gap: 2.700px; }
.g4 { margin-left: 20px; }
.led { margin: 15px 8px 0 auto; width: 20px; height: 9px; background: linear-gradient(#86b87c, #064d06 45%); }
.cal { font: italic 700 12px "Liberation Sans", sans-serif; fill: #333; }
.xw { font: 700 8px "Liberation Sans", sans-serif; fill: #fff; }
.ab { font: 700 11px "Liberation Serif", serif; fill: #111; }
.ex { font: 10px "Liberation Sans", sans-serif; fill: #fff; stroke: #fff; stroke-width: .3px; letter-spacing: -.4px; }

.mdi { height: 671px; display: flex; background: #fffff8; }
.client { width: 1268px; padding: 1px 0 0 124px; overflow: hidden; }
.win { width: 981px; height: 671px; border: 1px solid #2c4c54; border-bottom: 0; border-radius: 5px 5px 0 0; background: #c4c8be; overflow: hidden; display: flex; flex-direction: column; }
.wtitle { height: 22px; flex: none; display: flex; align-items: center; padding: 0 4px 0 4px; background: linear-gradient(#93b7cf 0 35%, #adc0e8 40% 60%, #afd2e8 68%); font: 11px "Noto Sans", sans-serif; color: #1c2430; }
.wtitle span { margin-left: 4px; letter-spacing: -.3px; }
.wclose { margin-left: auto; width: 29px; height: 16px; border: 1px solid #5a2c28; border-radius: 2px; background: linear-gradient(#dc9a8c, #bc4a38 50%, #c86850); display: flex; align-items: center; justify-content: center; }
.wbody { flex: 1; display: flex; padding: 9px 9px 0 8px; gap: 12px; border-left: 3px solid #b6d4e2; border-right: 2px solid #63b8cc; }
.panel { background: #e6eae0; border: 1px solid #f8fbf2; border-right: 2px solid #b0b4ac; flex: none; }
.left { width: 555px; border-bottom: 0; }
h1 { height: 25px; background: linear-gradient(#d4d7ce, #fbfdf4 48%, #b7bab2 75%, #868a82 96%, #dadcd4); text-align: center; font: 18px/25px "Liberation Sans", sans-serif; color: #7c6414; }
h1 span { display: inline-block; transform: translateX(1px) scaleX(.902); margin: 0 -20px; }

.info { height: 101px; display: flex; padding: 10px 0 0 14px; }
dl { display: grid; font: 700 10.500px/17.500px "Liberation Sans", sans-serif; align-content: start; column-gap: 5px; letter-spacing: -.13px; }
.i1 { grid-template-columns: 94px 120px; }
.i2 { grid-template-columns: 170px 60px; margin-left: 43px; padding-top: 3px; letter-spacing: .12px; }
.i2 dt:nth-of-type(3), .i2 dt:nth-of-type(4) { letter-spacing: .32px; }
dt { text-align: right; }
dd { color: #1c50b0; font-size: 11.500px; letter-spacing: -.2px; }
.i1 .s, .i2 .s { line-height: 13px; height: 13px; }
.i2 .gap { margin-bottom: 2px; }
.i2 dt.gap { letter-spacing: 0; }
.pr { padding-right: 3px; }
.i2 dt.tight { letter-spacing: -.15px; }
dd.green { color: #2c7448; }
dd.violet { color: #8010c8; }
.cap { height: 16px; display: flex; justify-content: space-between; padding: 0 14px 0 18px; font-size: 10.500px; line-height: 17px; color: #1c6c4c; letter-spacing: -.27px; }
.cap .suf { line-height: 15px; letter-spacing: .13px; }
.gridbox { height: 124px; width: 523px; margin-left: 14px; display: flex; background: #f6f9f1; border: 1px solid #6c7068; border-right-color: #f6f9f1; }
table { width: 504px; height: 122px; table-layout: fixed; border-collapse: collapse; flex: none; }
.c1 { width: 44px; } .c2 { width: 253px; } .c3 { width: 36px; } .c4 { width: 70px; } .c5 { width: 46px; } .c6 { width: 55px; }
th { height: 27px; padding: 0; background: #c6c0ae; border: 1px solid #5c5f58; border-left: 2px solid #5c5f58; font-size: 10.500px; letter-spacing: .05px; }
td { height: 15.600px; padding: 0 2px 0 1px; line-height: 14px; border: 1px solid #8c9084; font-size: 11px; overflow: hidden; text-align: center; background: #fffff8; color: #202028; }
td:nth-child(2), td:nth-child(4) { text-align: left; letter-spacing: .14px; }
td.wide:nth-child(2) { letter-spacing: .24px; }
th:first-child, td:first-child { border-left: 0; }
tr:nth-child(even) td { background: #ded9c6; }
.vs, .cvs { display: flex; flex-direction: column; align-items: center; }
.vs { width: 16px; padding: 5px 0 4px; }
.vs i { width: 14px; height: 61px; background: #ccd0c7; margin: 5px 0 auto; }
.item { display: block; height: 22px; padding-left: 20px; font-size: 11px; line-height: 28px; color: #1c6c4c; letter-spacing: -.31px; }
.itembox { width: 524px; height: 137px; margin-left: 15px; background: #f6f9f1; border-right: 2px solid #b4b8ae; border-bottom: 2px solid #b4b8ae; padding: 4px 3px 0 1px; }
.fld { height: 30px; background: #fffff8; }
.itembox > b { display: block; height: 24px; padding-left: 4px; font-size: 11px; line-height: 30px; color: #1c54b4; letter-spacing: -.3px; }
.ibtns { display: flex; align-items: flex-start; padding: 11px 0 0 9px; font-size: 10.500px; font-weight: 700; }
.ibtns button { height: 27px; box-shadow: -1px -1px 0 #fcfef8; margin-right: 8px; letter-spacing: -.05px; flex: none; }
.ibtns .w105 { width: 105px; margin-right: 9px; }
.ibtns .w39 { width: 39px; }
.dis { color: #777a78; }
.gr { color: #1c7044; }
.p1 { margin: -2px 9px 0 0; }
.p2 { margin: -6px 7px 0 1px; }
.ibtns .aa { font: 700 20px/26px "Liberation Sans"; color: #72767a; letter-spacing: -1px; align-items: baseline; padding-top: 1px; }
.aa small { font-size: 15px; }
.lists { display: flex; gap: 19px; padding: 14px 0 0 14px; }
.lists > div { width: 252px; }
.lists b { display: block; height: 16px; margin-left: 5px; font-size: 11px; line-height: 17px; letter-spacing: -.33px; transform: scaleX(.88); transform-origin: 0 0; }
.lists ul { height: 155px; background: #fffff8; border: 2px solid #868a80; border-right-color: #f4f7ee; border-bottom-color: #f4f7ee; }
.lists li { height: 13.800px; font-size: 11.500px; line-height: 14px; padding-left: 1px; letter-spacing: -.12px; }
.lists .sel { background: #0078dc; color: #e4f2ff; }
.dred { color: #9c1420; }
.dgreen { color: #1c6040; }
.resp { width: 524px; height: 18px; margin: 7px 0 0 14px; padding-left: 8px; background: #cdd1c7; line-height: 18px; font-size: 11px; letter-spacing: -.18px; display: flex; gap: 5px; }
.resp .blue { font-size: 12px; letter-spacing: -.5px; transform: scaleX(.93); transform-origin: 0 0; }
.blue { color: #1c4cac; }
.teal { color: #1c8484; }
.ochre { color: #907020; }
.red { color: #c01424; }

.right { width: 391px; flex: none; display: flex; flex-direction: column; gap: 10px; }
.disc { height: 282px; border-bottom: 2px solid #b0b4ac; }
.vote { height: 350px; border-bottom: 0; }
h2 { text-align: center; font-size: 11px; color: #1c3c64; letter-spacing: -.2px; }
.disc h2 { height: 31px; line-height: 25px; padding-right: 5px; transform: scaleX(.89); }
.vote h2 { height: 20px; line-height: 22px; padding-right: 4px; transform: scaleX(.912); }
.heads { display: grid; grid-template-columns: 233px 45px 60px; padding-left: 31px; font-size: 11px; line-height: 11px; height: 13px; }
.heads b { transform: scaleX(.9); transform-origin: 0 0; }
.disc .teal { line-height: 13px; letter-spacing: -.1px; }
.heads .red { transform: scaleX(.87); }
.heads.v { grid-template-columns: 200px 48px 35px 40px; line-height: 18px; height: 16px; letter-spacing: -.15px; }
.heads.v .blue { transform: scaleX(.87); }
.heads.v .dgreen { transform: scaleX(.93); }
.lcd { height: 155px; display: flex; margin-left: 29px; }
.disc .lcd { height: 156px; }
.lcd > div:first-child { width: 316px; margin: 3px 0; background: linear-gradient(#a8aca4, #000 6px calc(100% - 6px), #a8aca4); }
.os { width: 16px; background: #fffff8; border-left: 1px solid #ccc; display: flex; flex-direction: column; justify-content: space-between; }
.os i { font: 7px/13px "DejaVu Sans"; text-align: center; color: #999c94; height: 15px; background: #f2f5ec; border-right: 2px solid #7c8078; border-bottom: 2px solid #7c8078; }
.spins { height: 47px; display: flex; padding: 6px 0 0; }
label { font-size: 11px; font-weight: 700; line-height: 13px; text-align: right; padding-top: 2px; letter-spacing: .05px; }
.spins label { width: 43px; flex: none; padding-right: 1px; }
.spins label:first-child { width: 54px; }
.spins .mag { width: 33px; color: #b81cc0; letter-spacing: -.2px; }
.spins .red { width: 39px; padding-right: 3px; letter-spacing: -.2px; }
.spins > b, .vopts > b { width: 4px; font-size: 12px; line-height: 15px; text-align: center; }
.spin { width: 21px; height: 31px; font-size: 13px; font-weight: 700; text-align: center; line-height: 15px; letter-spacing: -.2px; background: #efe9d8; border: 1px solid #f8fbf2; color: #181818; flex: none; }
.spin s { display: flex; justify-content: space-around; align-items: center; width: 21px; margin-left: -1px; height: 15px; text-decoration: none; background: linear-gradient(#777b72, #777b72) 10px 0/1px 100% no-repeat #f6f9f1; border-bottom: 2px solid #777b72; border-right: 1px solid #777b72; }
.spin s::before, .spin s::after { content: ""; border: 3px solid transparent; border-width: 3px 3px 3px 0; border-right-color: #000; }
.spin s::after { border-width: 3px 0 3px 3px; border-left-color: #000; }
.pur { color: #88207c; }
.drd { color: #a01c24; }
.plus { color: #2080e0; font-weight: 400; margin-left: 1px; }
.plus s { background: #fbfdf6; border-color: #c4c8be; }
.plus s::before { content: "+"; border: 0; font: 700 12px/13px "Liberation Sans"; color: #c80c14; }
.plus s::after { content: none; }
.mic { margin-left: 6px; font-size: 11px; }
.mic b { display: block; color: #1c4cac; font-size: 11.500px; line-height: 16px; padding-left: 3px; letter-spacing: -.3px; }
.mic button { width: 43px; height: 16px; font-size: 11px; color: #666a66; font-weight: 700; margin: 0; letter-spacing: -.3px; }
.dbtns { display: flex; gap: 17px; padding-left: 10px; }
.dbtns button { width: 53px; height: 27px; }
.micro { margin: -2px 0 0 -3px; }

.vopts { display: flex; height: 35px; padding-top: 6px; padding-left: 27px; }
.chk { width: 12px; height: 12px; margin-top: 7px; border: 1px solid #777; background: #fffff8; flex: none; }
.blk { text-align: left; margin-left: 4px; width: 77px; padding-top: 1px; letter-spacing: -.15px; flex: none; }
.vopts button { height: 25px; margin-top: 2px; font-size: 11px; flex: none; }
.vopts .z { width: 23px; }
.ar { width: 31px; margin-left: 5px; color: #777; font-weight: 700; }
.vopts .gr { padding-top: 1px; flex: none; }
.vopts .t { width: 43px; margin-right: 4px; }
.vopts .seg { width: 65px; letter-spacing: -.1px; }
.vopts .spin { height: 29px; width: 20px; margin-left: 2px; }
.vopts .spin s { height: 13px; width: 20px; }
.vopts > b { width: 2px; }
.vbtns { display: flex; gap: 7px; padding: 6px 0 0 227px; }
.vbtns button { width: 40px; height: 26px; }
.vbot { display: flex; }
.notes { width: 227px; padding: 22px 0 0 28px; font-size: 10.500px; font-weight: 700; color: #2460bc; line-height: 15px; }
.notes p { white-space: nowrap; letter-spacing: -.1px; }
.notes .evi { color: #5c1018; margin-top: 15px; letter-spacing: -.23px; }
.rh { display: flex; justify-content: space-between; width: 134px; height: 18px; line-height: 23px; font-size: 11px; color: #1c50b0; letter-spacing: -.2px; }
.rh b { transform: scaleX(.91); transform-origin: 0 0; }
.rh b:last-child { font-size: 12px; line-height: 23px; color: #d01420; transform: none; }
.score { width: 134px; height: 40px; background: #000; border: 1px solid #777; display: grid; grid-template-columns: 25px 28px 30px 1fr; text-align: center; color: #f4f4f4; font-size: 10px; line-height: 16px; }
.score i { font: 18px/17px "Liberation Sans"; transform: translateX(-1px) scaleX(.95); }
.score b:nth-child(4), .score i:nth-child(8) { padding-left: 10px; }
.g { color: #10d818; } .r { color: #d81018; } .m { color: #e010e0; } .y { color: #e0e010; }

.cvs { width: 14px; background: #f6f9f1; padding: 5px 0; }
.cvs i { width: 13px; height: 606px; background: #ccd0c7; margin: 4px 0 auto; }
.side { width: 130px; background: #c2d3fc; display: flex; flex-direction: column; border-left: 1px solid #b2bcf0; }
.side h3 { height: 42px; line-height: 54px; text-align: center; font-weight: 400; font-size: 17.500px; color: #3c4c78; letter-spacing: -.5px; background: linear-gradient(#7c9cd8, #a9c0f0 3px, #d4e0fc 9px, #c2d3fc 11px); }
.cards { flex: 1; margin: 0 4px 0 5px; background: #e2faff; padding: 7px 0 0 18px; display: flex; flex-direction: column; gap: 8.400px; }
.card { width: 86px; height: 81px; background: #e6e6fc; display: flex; flex-direction: column; align-items: center; padding-top: 6px; position: relative; font-size: 10.500px; line-height: 13px; color: #111; }
.card > svg { width: 45px; height: 42px; background: #fffff8; margin-bottom: 4px; }
.card b { letter-spacing: .2px; }
.card .n { letter-spacing: -.25px; }
.card em { position: absolute; right: 0; top: 1px; }
.card em svg { width: 12px; height: 12px; }
.side footer { height: 19px; padding: 3px 0 0 7px; font-size: 11px; line-height: 13px; background: linear-gradient(#c2d3fc 50%, #86a4dc 75%, #5878bc 85%, #c2d3fc 90%); letter-spacing: -.6px; }

.taskbar { height: 40px; flex: none; display: flex; background: #221f20; }
.start { width: 48px; display: flex; align-items: center; justify-content: center; }
.search { width: 344px; background: #f2f2f2; border: 1px solid #c4c4c4; display: flex; align-items: center; padding-left: 10px; font: 15px "Open Sans", sans-serif; color: #333; }
.search span { margin-left: 11px; letter-spacing: -.3px; }
.apps { display: flex; }
.apps > div { width: 49.100px; display: flex; align-items: center; justify-content: center; }
.run { background: linear-gradient(#76b9ed, #76b9ed) center bottom/40px 2px no-repeat; }
.act { background: linear-gradient(#76b9ed, #76b9ed) center bottom/100% 2px no-repeat #484848; }
.ts { width: 24px; height: 23px; border-radius: 12px; background: #1428a4; color: #fff; font: 700 14px/23px "Liberation Sans"; text-align: center; letter-spacing: -1px; }
.tray { margin-left: auto; display: flex; align-items: center; gap: 8px; color: #fff; font: 12px/18px "Open Sans", sans-serif; }
.lang { font-size: 11.500px; letter-spacing: -.3px; width: 27px; }
.clock { text-align: center; font-size: 11.500px; letter-spacing: -.3px; width: 62px; }
.notif { margin: 0 25px 0 7px; }
```
